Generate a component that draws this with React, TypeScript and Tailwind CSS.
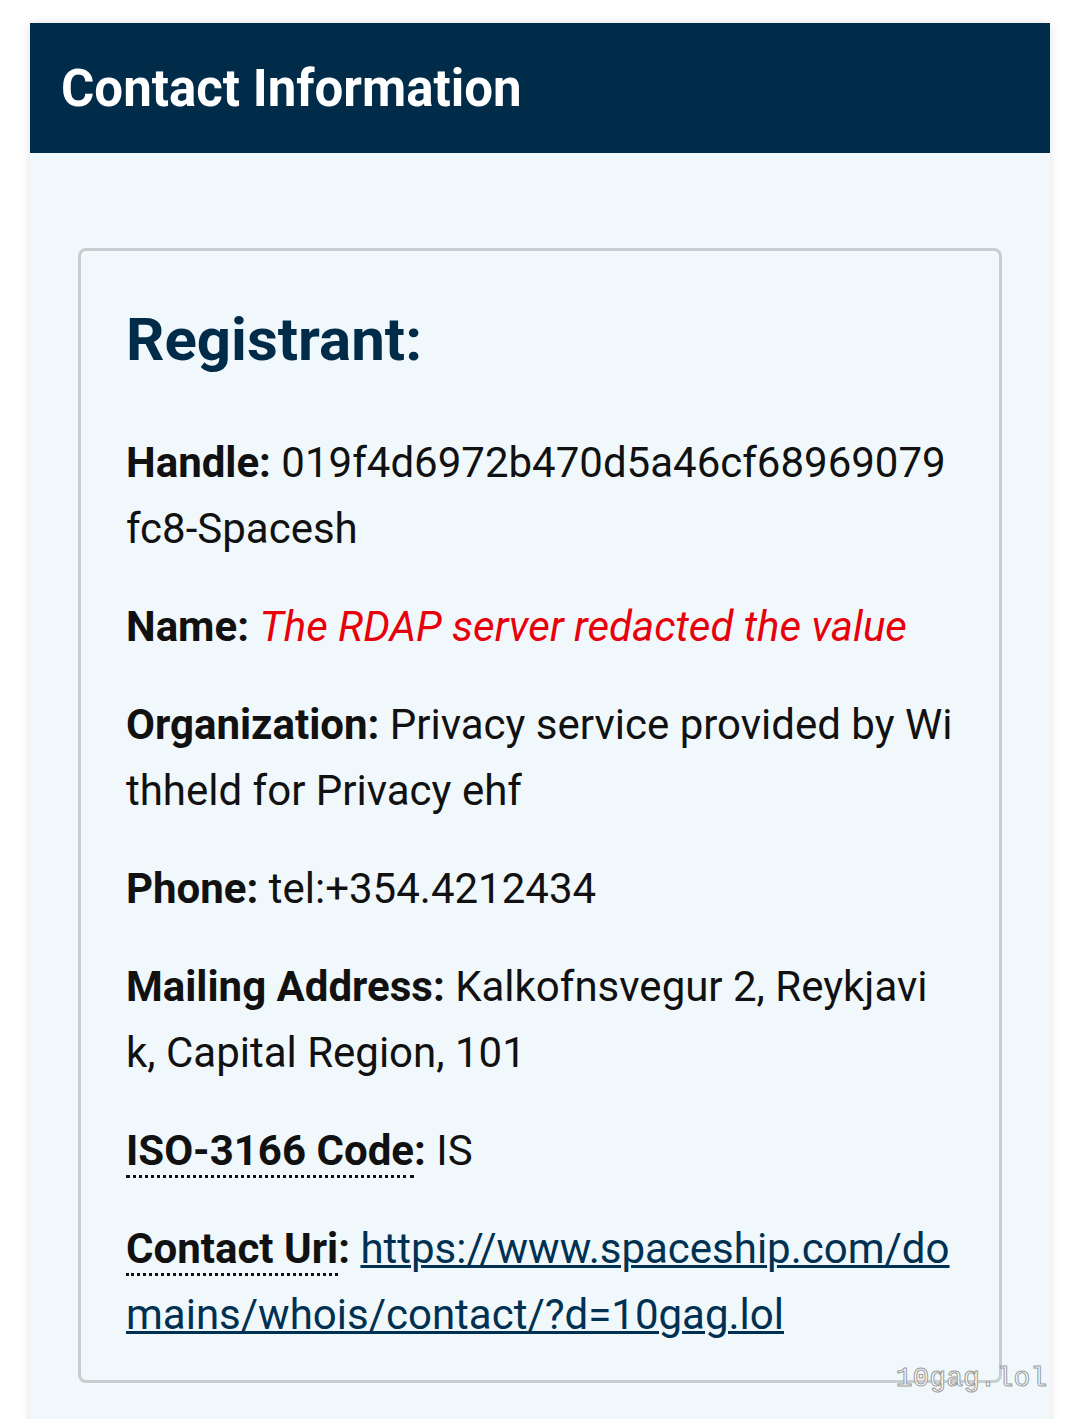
export default function App() {
  const font = { fontFamily: 'Roboto, "Noto Sans", sans-serif' }
  return (
    <div className="min-h-screen bg-white px-[30px] pt-[23px] relative overflow-hidden" style={font}>
      <section className="bg-[#f0f8fb] shadow-[0_0_10px_rgba(0,0,0,0.12)] pb-[80px]">
        <header className="bg-[#002b49] h-[130px] flex items-center px-[31px]">
          <h2 className="text-white font-bold text-[51px] leading-none">Contact Information</h2>
        </header>
        <div className="pt-[95px] px-[48px]">
          <div className="border-[3px] border-[#c8cdd0] rounded-[8px] pl-[45px] pr-[45px] pt-[54px] pb-[32px] break-all text-[42px] leading-[66px] text-[#111]">
            <h3 className="text-[60px] leading-[70px] font-bold text-[#002b49] mb-[55px]">Registrant:</h3>
            <p className="mb-[32px]">
              <b>Handle:</b> 019f4d6972b470d5a46cf68969079fc8-Spacesh
            </p>
            <p className="mb-[32px]">
              <b>Name:</b> <i className="text-[#e8000b]">The RDAP server redacted the value</i>
            </p>
            <p className="mb-[32px]">
              <b>Organization:</b> Privacy service provided by Withheld for Privacy ehf
            </p>
            <p className="mb-[32px]">
              <b>Phone:</b> tel:+354.4212434
            </p>
            <p className="mb-[32px]">
              <b>Mailing Address:</b> Kalkofnsvegur 2, Reykjavik, Capital Region, 101
            </p>
            <p className="mb-[32px]">
              <b>
                <abbr title="ISO-3166" className="no-underline border-b-[3px] border-dotted border-[#111]">ISO-3166 Code</abbr>:
              </b>{' '}
              IS
            </p>
            <p>
              <b>
                <abbr title="Contact Uri" className="no-underline border-b-[3px] border-dotted border-[#111]">Contact Uri</abbr>:
              </b>{' '}
              <a href="#" className="text-[#003152] underline decoration-[3px]">
                https://www.spaceship.com/domains/whois/contact/?d=10gag.lol
              </a>
            </p>
          </div>
        </div>
      </section>
      <div
        className="absolute right-[33px] top-[1365px] text-[28px] leading-none text-white [-webkit-text-stroke:1px_#999]"
        style={{ fontFamily: '"Liberation Mono", "DejaVu Sans Mono", monospace' }}
      >
        10gag.lol
      </div>
    </div>
  )
}
